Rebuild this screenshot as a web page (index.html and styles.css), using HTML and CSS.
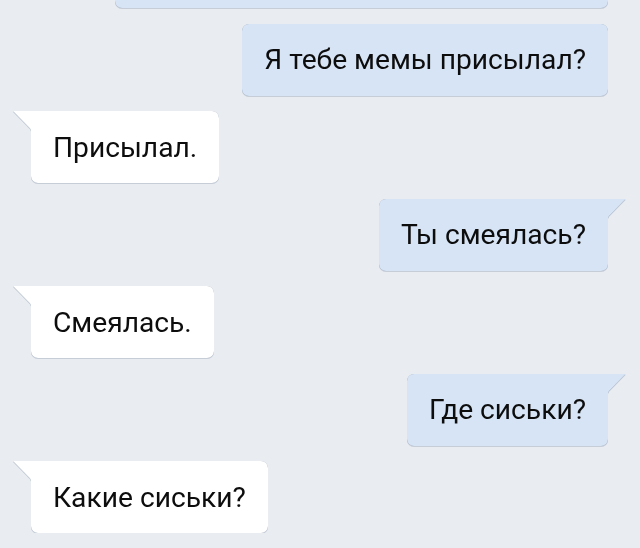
FILE: index.html
```html
<!DOCTYPE html>
<html lang="ru">
<head>
    <meta charset="UTF-8" />
    <meta name="viewport" content="width=device-width, initial-scale=1.0" />
    <title>Диалог</title>
    <link rel="stylesheet" href="styles.css">
</head>
<body>
<div class="chat">
    <!-- предыдущее сообщение, видно только низ -->
    <div class="msg out first">
        <div class="bubble wide"></div>
    </div>
    <div class="msg out">
        <div class="bubble">Я тебе мемы присылал?</div>
    </div>
    <div class="msg in">
        <div class="bubble tail">Присылал.</div>
    </div>
    <div class="msg out">
        <div class="bubble tail">Ты смеялась?</div>
    </div>
    <div class="msg in">
        <div class="bubble tail">Смеялась.</div>
    </div>
    <div class="msg out">
        <div class="bubble tail">Где сиськи?</div>
    </div>
    <div class="msg in">
        <div class="bubble tail">Какие сиськи?</div>
    </div>
</div>
</body>
</html>
```

FILE: styles.css
```css
body {
  margin: 0;
  background: #e9edf2;
  font-family: Roboto, "Liberation Sans", sans-serif;
  color: #0d0d0d;
  overflow: hidden;
}
.chat {
  display: flex;
  flex-direction: column;
  gap: 15.5px;
  padding-top: 24px;
}
.msg {
  display: flex;
}
.msg.in {
  justify-content: flex-start;
  padding-left: 31px;
}
.msg.out {
  justify-content: flex-end;
  padding-right: 32px;
}
.first {
  margin-top: -88px; /* сообщение выше экрана */
}
.bubble {
  position: relative;
  display: flex;
  align-items: center;
  height: 72px;
  padding: 0 22px;
  box-sizing: border-box;
  font-size: 28.2px;
  border-radius: 7px;
  white-space: nowrap;
  filter: drop-shadow(0 0 0.5px rgba(60, 80, 110, 0.45)) drop-shadow(0 1px 0.5px rgba(60, 80, 110, 0.2));
}
.wide {
  width: 493px;
}
.in .bubble {
  background: #fff;
}
.out .bubble {
  background: #d6e4f5;
}
.in .tail {
  border-top-left-radius: 0;
}
.out .tail {
  border-top-right-radius: 0;
}
.tail::before {
  content: "";
  position: absolute;
  top: 0;
  width: 19px;
  height: 22px;
  background: inherit;
}
.in .tail::before {
  left: -18px;
  clip-path: polygon(0 0, 100% 0, 100% 100%, 90% 80%);
}
.out .tail::before {
  right: -18px;
  clip-path: polygon(0 0, 100% 0, 10% 80%, 0 100%);
}
```
